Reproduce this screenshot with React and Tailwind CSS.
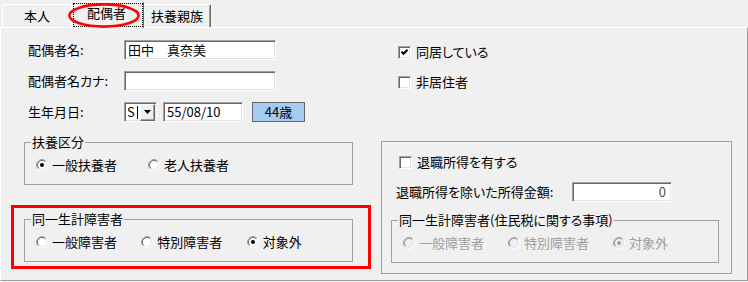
import React from 'react';

const Radio = ({ checked, disabled }) => (
  <svg width="12" height="12" viewBox="0 0 12 12" className="shrink-0">
    <circle cx="6" cy="6" r="5" fill={disabled ? '#f0f0f0' : '#ffffff'} />
    <path d="M2.11 9.89 A5.5 5.5 0 0 1 9.89 2.11" fill="none" stroke="#a0a0a0" />
    <path d="M2.82 9.18 A4.5 4.5 0 0 1 9.18 2.82" fill="none" stroke={disabled ? '#a0a0a0' : '#696969'} />
    <path d="M9.89 2.11 A5.5 5.5 0 0 1 2.11 9.89" fill="none" stroke="#ffffff" />
    <path d="M9.18 2.82 A4.5 4.5 0 0 1 2.82 9.18" fill="none" stroke="#e3e3e3" />
    {checked && <circle cx="6" cy="6" r="2" fill={disabled ? '#a0a0a0' : '#000000'} />}
  </svg>
);

const Checkbox = ({ checked }) => (
  <span className="w-[13px] h-[13px] shrink-0 bg-white border border-[#a0a0a0] border-r-white border-b-white shadow-[inset_1px_1px_0_#696969,inset_-1px_-1px_0_#e3e3e3] flex items-center justify-center">
    {checked && (
      <svg width="7" height="7" viewBox="0 0 7 7">
        <polyline points="0.5,2.8 2.5,4.8 6.5,0.8" fill="none" stroke="#000" strokeWidth="2" />
      </svg>
    )}
  </span>
);

const TextBox = ({ value, className = '', align = 'left' }) => (
  <div
    className={`h-[20px] bg-white border border-[#a0a0a0] border-r-white border-b-white shadow-[inset_1px_1px_0_#696969,inset_-1px_-1px_0_#e3e3e3] flex items-center px-[3px] ${align === 'right' ? 'justify-end' : ''} ${className}`}
  >
    {value}
  </div>
);

const GroupBox = ({ title, className = '', children }) => (
  <div className={`relative border border-[#a0a0a0] ${className}`}>
    <span className="absolute -top-[8px] left-[6px] px-[1px] bg-[#f0f0f0] whitespace-nowrap [font-feature-settings:'palt']">{title}</span>
    {children}
  </div>
);

const RadioRow = ({ items, disabled }) => (
  <div className="flex items-center h-[14px] mt-[15px] ml-[11px]">
    {items.map((it) => (
      <div key={it.label} className="w-[112px] flex items-center gap-[4px]">
        <Radio checked={it.checked} disabled={disabled} />
        <span className={disabled ? 'text-[#a0a0a0]' : ''}>{it.label}</span>
      </div>
    ))}
  </div>
);

const FieldRow = ({ label, children }) => (
  <div className="flex items-center h-[20px]">
    <span className="w-[100px] pl-[4px] [font-feature-settings:'palt']">{label}</span>
    {children}
  </div>
);

const CheckRow = ({ checked, label }) => (
  <div className="flex items-center h-[14px] gap-[5px]">
    <Checkbox checked={checked} />
    <span className="[font-feature-settings:'palt']">{label}</span>
  </div>
);

export default function App() {
  return (
    <div className="w-[748px] h-[282px] bg-[#f0f0f0] overflow-hidden text-[13px] leading-[14px] text-black font-['Noto_Sans_CJK_JP',sans-serif]">
      {/* tabs */}
      <div className="flex items-end h-[27px] pl-[2px]">
        <div className="w-[69px] h-[23px] border-t border-l border-white rounded-tl-[2px] flex items-center justify-center">
          本人
        </div>
        <div className="relative z-10 -mb-px w-[73px] h-[27px] bg-[#f0f0f0] border-t border-l border-white border-r border-r-[#696969] rounded-t-[2px] flex justify-center pt-[4px]">
          <span className="absolute left-[1px] top-[1px] right-0 bottom-[1px] border border-dotted border-black" />
          <span className="pr-[2px]">配偶者</span>
          <svg className="absolute left-[-4px] top-[1px]" width="72" height="25" viewBox="0 0 72 25">
            <ellipse cx="36" cy="12.5" rx="34.6" ry="11.1" fill="none" stroke="#ff0000" strokeWidth="2.6" />
          </svg>
        </div>
        <div className="w-[67px] h-[23px] border-t border-white border-r border-r-[#696969] shadow-[inset_-1px_0_0_#a0a0a0] rounded-tr-[2px] flex items-center justify-center">
          扶養親族
        </div>
      </div>

      {/* panel */}
      <div className="h-[254px] border-t border-l border-white border-r border-r-[#a0a0a0] border-b border-b-[#a0a0a0] flex">
        {/* left column */}
        <div className="w-[371px] pl-[23px] pt-[12px] flex flex-col">
          <div className="flex flex-col gap-[11px]">
            <FieldRow label="配偶者名:">
              <TextBox value="田中　真奈美" className="w-[152px]" />
            </FieldRow>
            <FieldRow label="配偶者名カナ:">
              <TextBox value="" className="w-[152px]" />
            </FieldRow>
            <FieldRow label="生年月日:">
              <div className="w-[33px] h-[20px] bg-white border border-[#a0a0a0] border-r-white border-b-white shadow-[inset_1px_1px_0_#696969,inset_-1px_-1px_0_#e3e3e3] flex items-center pl-[2px] pr-[1px]">
                <span>S</span>
                <span className="w-px h-[13px] bg-black ml-[2px]" />
                <span className="ml-auto w-[15px] h-[17px] bg-[#f0f0f0] border border-white border-r-[#696969] border-b-[#696969] shadow-[inset_-1px_-1px_0_#a0a0a0] flex items-center justify-center">
                  <svg width="7" height="4" viewBox="0 0 7 4">
                    <polygon points="0,0 7,0 3.5,4" fill="#000" />
                  </svg>
                </span>
              </div>
              <TextBox value="55/08/10" className="w-[80px] ml-[6px]" />
              <div className="w-[53px] h-[20px] ml-[9px] bg-[#a6caf0] border border-[#646464] flex items-center justify-center">
                44歳
              </div>
            </FieldRow>
          </div>

          <GroupBox title="扶養区分" className="w-[329px] h-[43px] mt-[20px]">
            <RadioRow
              items={[
                { label: '一般扶養者', checked: true },
                { label: '老人扶養者', checked: false },
              ]}
            />
          </GroupBox>

          <div className="relative mt-[34px]">
            <GroupBox title="同一生計障害者" className="w-[329px] h-[43px]">
              <RadioRow
                items={[
                  { label: '一般障害者', checked: false },
                  { label: '特別障害者', checked: false },
                  { label: '対象外', checked: true },
                ]}
              />
            </GroupBox>
            <span className="absolute left-[-13px] top-[-14px] w-[360px] h-[64px] border-[3px] border-[#ff0000] pointer-events-none" />
          </div>
        </div>

        {/* right column */}
        <div className="flex-1 pt-[17px] flex flex-col">
          <div className="pl-[26px] flex flex-col gap-[16px]">
            <CheckRow checked label="同居している" />
            <CheckRow checked={false} label="非居住者" />
          </div>

          <div className="ml-[9px] mt-[52px] w-[351px] h-[133px] border border-[#a0a0a0] flex flex-col">
            <div className="ml-[17px] mt-[13px]">
              <CheckRow checked={false} label="退職所得を有する" />
            </div>
            <div className="ml-[14px] mt-[13px] flex items-center h-[20px]">
              <span className="w-[176px] [font-feature-settings:'palt']">退職所得を除いた所得金額:</span>
              <TextBox value="0" align="right" className="w-[100px] pr-[5px] text-[#505050]" />
            </div>
            <GroupBox title="同一生計障害者(住民税に関する事項)" className="ml-[9px] mt-[18px] w-[328px] h-[43px]">
              <RadioRow
                disabled
                items={[
                  { label: '一般障害者', checked: false },
                  { label: '特別障害者', checked: false },
                  { label: '対象外', checked: true },
                ]}
              />
            </GroupBox>
          </div>
        </div>
      </div>
    </div>
  );
}
